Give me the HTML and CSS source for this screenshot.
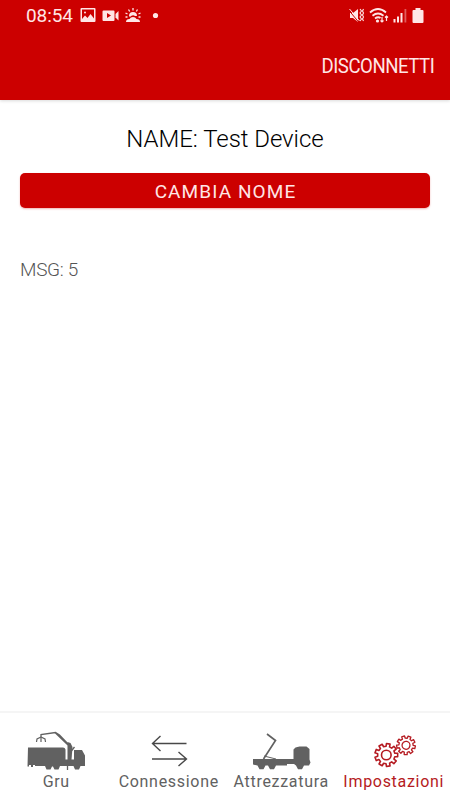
FILE: index.html
```html
<!DOCTYPE html>
<html lang="it">
<head>
    <meta charset="UTF-8">
    <meta name="viewport" content="width=device-width, initial-scale=1.0">
    <title>Impostazioni</title>
    <link rel="stylesheet" href="styles.css">
</head>
<body>

    <header class="app-header">
        <div class="status-bar">
            <span class="clock">08:54</span>
            <svg class="status-left" width="84" height="18" viewBox="0 0 84 18" fill="#ffe6e6">
                <path fill-rule="evenodd" d="M1.500 1h13q1 0 1 1v12q0 1-1 1h-13q-1 0-1-1V2q0-1 1-1zM2 2.500v9.500l3-3.500 2.500 2.500 3-4 3.500 4.500v-9z"/>
                <circle cx="5" cy="5.500" r="1"/>
                <path fill-rule="evenodd" d="M23.500 3.500h10q1 0 1 1v8.500q0 1-1 1h-10q-1 0-1-1V4.500q0-1 1-1zM27 6v5l4-2.500z"/>
                <path d="M35.500 7l3-3v9.500l-3-3z"/>
                <path d="M49 9a4 4 0 0 1 8 0l-2 0a3.500 3.500 0 0 0-5 1zM46 15q0-3 3.500-3 1-2 3.500-2t3.500 2q3.500 0 3.500 3z"/>
                <path d="M53 1v2.500M48.500 2.500l1.200 2M57.500 2.500l-1.200 2M45.500 6l2 1M60.500 6l-2 1M45.500 10h2M58.500 10h2" stroke="#ffe6e6" stroke-width="1.300"/>
                <circle cx="75.500" cy="8.500" r="2.600"/>
            </svg>
            <svg class="status-right" width="78" height="18" viewBox="0 0 78 18" fill="#ffe6e6">
                <path d="M2 6h3l5-4v13l-5-4H2z"/>
                <path d="M1 3.500l10 12" stroke="#cc0000" stroke-width="1"/>
                <path d="M1.500 2l10 12" stroke="#ffe6e6" stroke-width="1"/>
                <path d="M12 2l1.500 2-1.500 2 1.500 2-1.500 2 1.500 2-1.500 2M15.500 2l-1 2 1 2-1 2 1 2-1 2 1 2" fill="none" stroke="#ffe6e6" stroke-width="1.100"/>
                <path d="M22 5.500q8-7 16 0M24.500 8.700q5.500-4.500 11 0M27 11.500q3-2.200 5.500-.5" fill="none" stroke="#ffe6e6" stroke-width="1.800"/>
                <circle cx="29.500" cy="14" r="1.600"/>
                <path d="M34 10v5m-1.500-1.500L34 15l1.500-1.500M38.500 14V9M37 10.500L38.500 9l1.500 1.500" fill="none" stroke="#ffe6e6" stroke-width="1.200"/>
                <path d="M45.500 12h2v3.500h-2zM49 9.500h2v6h-2zM52.500 6h2v9.500h-2z"/>
                <path d="M56.500 2h1.800v13.500h-1.800z" opacity=".4"/>
                <path d="M67.500 1h5v2h2q1 0 1 1v11q0 1-1 1h-9q-1 0-1-1V4q0-1 1-1h2z"/>
            </svg>
        </div>
        <div class="toolbar"><span class="disconnect">DISCONNETTI</span></div>
    </header>

    <main class="content">
        <h1 class="device-name">NAME: Test Device</h1>
        <button class="rename-button">CAMBIA NOME</button>
        <p class="message-count">MSG: 5</p>
    </main>

    <nav class="tab-bar">
        <a class="tab">
            <svg width="60" height="40" viewBox="0 0 60 40" fill="#616161">
                <path d="M2 17.500H37q2 0 2.500 2v10h2.500V18h3v11.500h3V20h8l3 5.500v10.500H54.500l-1.500 3.500h-4l-1.500-3.500H34l-1.500 3.500h-4L27 36.500h-1L24.500 39.500h-4L19 36H9v-1H7v2H5v-2H3v1.500H1.500z"/>
                <path d="M41.500 12l3 1 2 4-1 13-4 3z"/>
                <path d="M15 8V4.500L29.500 2.500l4 2.500 10.500 11M29.500 3L42 15M43 24l5.500-7M41.500 36v4" fill="none" stroke="#616161" stroke-width="1.300"/>
                <path d="M15 7l-4 2-.5 3M15 8v4M15 7l4 2 .5 3" fill="none" stroke="#616161" stroke-width="1.200"/>
            </svg>
            <span>Gru</span>
        </a>
        <a class="tab">
            <svg width="60" height="40" viewBox="0 0 60 40" fill="none" stroke="#484848" stroke-width="1.400">
                <path d="M47.500 13.500H13.500M21.500 6l-8 7.500 8 7.500M13 29H47M39.500 22l8 7-8 7"/>
            </svg>
            <span>Connessione</span>
        </a>
        <a class="tab">
            <svg width="60" height="40" viewBox="0 0 60 40" fill="#616161">
                <path d="M2 29H42.500V19.500l2-2 4-1h7l3 2.500v10.500l1 3-1.500 3H53l-2 3.800h-4l-2-3.800-2-1.500h-7v1.500H25l-2 3.800h-4l-2-3.800h-2.500l-2 3.800H8.500l-2-3.800L2 34.500z"/>
                <path d="M12.500 29L24.500 10.500 16 4" fill="none" stroke="#616161" stroke-width="1.700"/>
                <path d="M13 26l12 3" stroke="#616161"/>
            </svg>
            <span>Attrezzatura</span>
        </a>
        <a class="tab active">
            <svg width="60" height="40" viewBox="0 0 60 40" fill="none" stroke="#b51b22" stroke-width="1.600" stroke-linejoin="round">
                <defs>
                    <g id="gear">
                        <path d="M8.510-1.810L11.360-1.800V1.800L8.510 1.810 7.680 4.080 9.860 5.920 7.540 8.680 5.360 6.860 3.260 8.070 3.740 10.870 .2 11.500-.3 8.690-2.690 8.270-4.120 10.740-7.240 8.940-5.820 6.470-7.380 4.610-10.060 5.580-11.290 2.190-8.620 1.210V-1.210L-11.290-2.190-10.060-5.580-7.380-4.610-5.820-6.470-7.240-8.940-4.120-10.740-2.690-8.270-.3-8.690 .2-11.500 3.740-10.870 3.260-8.070 5.360-6.860 7.540-8.680 9.860-5.920 7.680-4.080z"/>
                        <circle r="4.800"/>
                    </g>
                </defs>
                <use href="#gear" transform="translate(22.300 25)"/>
                <use href="#gear" transform="translate(42 15.300) rotate(12) scale(.82)"/>
            </svg>
            <span>Impostazioni</span>
        </a>
    </nav>

</body>
</html>
```
FILE: styles.css
```css
* {
    box-sizing: border-box;
    margin: 0;
    padding: 0;
}

body {
    display: flex;
    flex-direction: column;
    height: 100vh;
    background-color: #fff;
    font-family: Roboto, "Liberation Sans", sans-serif;
    overflow: hidden;
}

.app-header {
    height: 100px;
    background-color: #cc0000;
    color: #ffe6e6;
    box-shadow: 0 1px 3px rgba(0, 0, 0, 0.15);
}

.status-bar {
    display: flex;
    align-items: center;
    height: 31px;
    padding: 0 24px 0 26px;
}

.clock {
    width: 54px;
    font-size: 19px;
    letter-spacing: -0.1px;
}

.status-right {
    margin-left: auto;
}

.toolbar {
    display: flex;
    align-items: center;
    justify-content: flex-end;
    height: 69px;
    padding-right: 16px;
}

.disconnect {
    font-size: 20px;
    letter-spacing: -0.5px;
    transform: scaleX(0.93);
    transform-origin: right;
}

.content {
    flex: 1;
    padding: 20px;
}

.device-name {
    height: 38px;
    line-height: 38px;
    text-align: center;
    font-size: 24px;
    font-weight: 300;
    letter-spacing: -0.05px;
    color: #000;
}

.rename-button {
    display: block;
    width: 100%;
    height: 35px;
    margin-top: 15px;
    padding: 2px 0 0 1px;
    border: none;
    border-radius: 5px;
    background-color: #cc0000;
    box-shadow: 0 1px 2px rgba(204, 0, 0, 0.3);
    color: #ffe6e6;
    font-family: inherit;
    font-size: 19px;
    letter-spacing: 1.1px;
}

.message-count {
    margin-top: 50px;
    line-height: 24px;
    font-size: 19px;
    font-weight: 300;
    letter-spacing: -0.3px;
    color: #555;
}

/* Bottom navigation */
.tab-bar {
    display: grid;
    grid-template-columns: repeat(4, 1fr);
    height: 89px;
    border-top: 2px solid #f5f5f5;
}

.tab {
    display: flex;
    flex-direction: column;
    align-items: center;
    gap: 1px;
    padding-top: 17px;
    color: #616161;
    font-size: 16px;
    line-height: 22px;
    letter-spacing: 0.7px;
    white-space: nowrap;
}

.tab.active {
    color: #b51b22;
}
```
